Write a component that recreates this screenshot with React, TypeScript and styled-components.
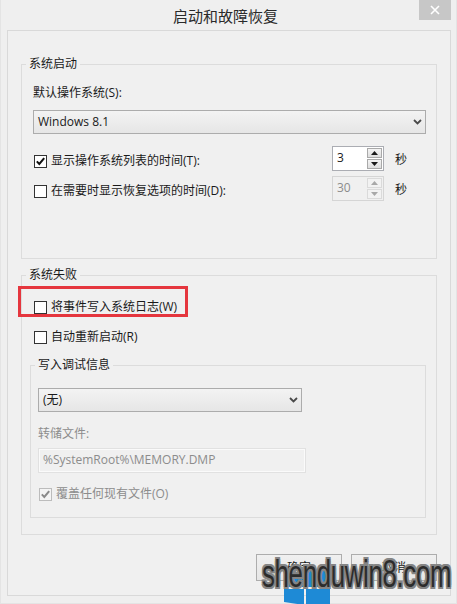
import styled, { createGlobalStyle } from 'styled-components';

const GlobalStyle = createGlobalStyle`
  html, body {
    margin: 0;
    padding: 0;
    background: #f0f0f0;
  }
  body {
    font-family: "Open Sans", "Noto Sans CJK SC", sans-serif;
    font-size: 12px;
    color: #1a1a1a;
  }
  * {
    box-sizing: border-box;
  }
`;

type CheckProps = { checked?: boolean; disabled?: boolean };

function CheckBox({ checked, disabled }: CheckProps) {
  return (
    <Box $disabled={disabled}>
      {checked && (
        <svg width="11" height="11" viewBox="0 0 11 11">
          <path
            d="M1.8 5.4 L4.3 8 L9.2 2.2"
            stroke={disabled ? '#8a8a8a' : '#111'}
            strokeWidth="2"
            fill="none"
          />
        </svg>
      )}
    </Box>
  );
}

function Chevron() {
  return (
    <svg width="9" height="6" viewBox="0 0 9 6">
      <path d="M1 1 L4.5 4.5 L8 1" stroke="#4a4a4a" strokeWidth="1.8" fill="none" />
    </svg>
  );
}

function Spinner({ value, disabled }: { value: string; disabled?: boolean }) {
  const arrow = disabled ? '#a8a8a8' : '#1a1a1a';
  return (
    <SpinBox $disabled={disabled}>
      <SpinValue $disabled={disabled}>{value}</SpinValue>
      <SpinButtons>
        <SpinButton $disabled={disabled}>
          <svg width="7" height="4" viewBox="0 0 7 4">
            <path d="M3.5 0 L7 4 H0 Z" fill={arrow} />
          </svg>
        </SpinButton>
        <SpinButton $disabled={disabled}>
          <svg width="7" height="4" viewBox="0 0 7 4">
            <path d="M0 0 H7 L3.5 4 Z" fill={arrow} />
          </svg>
        </SpinButton>
      </SpinButtons>
    </SpinBox>
  );
}

export default function App() {
  return (
    <>
      <GlobalStyle />
      <Window>
        <TitleBar>
          <span />
          <Title>启动和故障恢复</Title>
          <CloseButton>
            <svg width="10" height="10" viewBox="0 0 10 10">
              <path d="M1 1 L9 9 M9 1 L1 9" stroke="#fff" strokeWidth="1.6" />
            </svg>
          </CloseButton>
        </TitleBar>
        <Body>
          <Panel>
            <GroupBox $padTop={13} $padBottom={57}>
              <Legend>系统启动</Legend>
              <FieldLabel>默认操作系统(S):</FieldLabel>
              <Select $top={9}>
                <span>Windows 8.1</span>
                <Chevron />
              </Select>
              <TimeoutRow $top={12}>
                <CheckLabel>
                  <CheckBox checked />
                  显示操作系统列表的时间(T):
                </CheckLabel>
                <Spinner value="3" />
                <Unit>秒</Unit>
              </TimeoutRow>
              <TimeoutRow $top={5}>
                <CheckLabel>
                  <CheckBox />
                  在需要时显示恢复选项的时间(D):
                </CheckLabel>
                <Spinner value="30" disabled />
                <Unit>秒</Unit>
              </TimeoutRow>
            </GroupBox>

            <GroupBox $padTop={16} $padBottom={16} $top={8}>
              <Legend>系统失败</Legend>
              <CheckRow>
                <Highlight />
                <CheckBox />
                将事件写入系统日志(W)
              </CheckRow>
              <CheckRow $top={14}>
                <CheckBox />
                自动重新启动(R)
              </CheckRow>
              <SubGroup>
                <SubLegend>写入调试信息</SubLegend>
                <Select $width={264}>
                  <span>(无)</span>
                  <Chevron />
                </Select>
                <FieldLabel $top={14} $disabled>
                  转储文件:
                </FieldLabel>
                <TextField>%SystemRoot%\MEMORY.DMP</TextField>
                <CheckRow $top={13} $disabled>
                  <CheckBox checked disabled />
                  覆盖任何现有文件(O)
                </CheckRow>
              </SubGroup>
            </GroupBox>

            <ButtonRow>
              <Button>确定</Button>
              <Button>取消</Button>
            </ButtonRow>
          </Panel>
        </Body>

        <Watermark>
          <WatermarkLogo width="48" height="40" viewBox="0 0 48 40">
            <path d="M0 6 L20 3 V19 H0 Z" fill="#1e8ad6" />
            <path d="M22 2.7 L46 0 V19 H22 Z" fill="#1e8ad6" />
            <path d="M0 21 H20 V37 L0 34 Z" fill="#1e8ad6" />
            <path d="M22 21 H46 V40 L22 37.3 Z" fill="#1e8ad6" />
          </WatermarkLogo>
          <WatermarkText>shenduwin8.com</WatermarkText>
        </Watermark>
      </Window>
    </>
  );
}

const Window = styled.div`
  position: relative;
  width: 457px;
  height: 604px;
  display: flex;
  flex-direction: column;
  background: #efefef;
  box-shadow: inset 1px 0 0 #e4e4e4, inset -1px 0 0 #e4e4e4, inset 0 -1px 0 #e4e4e4;
  overflow: hidden;
`;

const TitleBar = styled.div`
  height: 30px;
  flex: none;
  display: grid;
  grid-template-columns: 1fr auto 1fr;
  padding-right: 6px;
`;

const Title = styled.div`
  align-self: center;
  font-family: "Noto Sans CJK SC", sans-serif;
  font-size: 15px;
  line-height: 20px;
  color: #2a2a2a;
  padding-top: 1px;
`;

const CloseButton = styled.div`
  justify-self: end;
  align-self: start;
  width: 32px;
  height: 20px;
  background: #c7c7c7;
  display: flex;
  align-items: center;
  justify-content: center;
`;

const Body = styled.div`
  flex: 1;
  display: flex;
  padding: 0 6px 8px 7px;
`;

const Panel = styled.div`
  flex: 1;
  display: flex;
  flex-direction: column;
  border: 1px solid #d9d9d9;
  background: #f0f0f0;
  padding: 25px 13px 14px;
`;

const GroupBox = styled.fieldset<{ $padTop: number; $padBottom: number; $top?: number }>`
  margin: ${(p) => p.$top ?? 0}px 0 0;
  min-width: 0;
  border: 1px solid #dcdcdc;
  padding: ${(p) => p.$padTop}px 10px ${(p) => p.$padBottom}px 11px;
`;

const Legend = styled.legend`
  padding: 0 3px;
  margin-left: -7px;
  line-height: 16px;
  color: #1a1a1a;
`;

const SubGroup = styled.fieldset`
  margin: 12px 0 0 -3px;
  min-width: 0;
  border: 1px solid #dcdcdc;
  padding: 15px 10px 15px 7px;
`;

const SubLegend = styled.legend`
  padding: 0 3px;
  margin-left: -3px;
  line-height: 16px;
  color: #1a1a1a;
`;

const FieldLabel = styled.div<{ $top?: number; $disabled?: boolean }>`
  margin-top: ${(p) => p.$top ?? 0}px;
  line-height: 16px;
  color: ${(p) => (p.$disabled ? '#8c8c8c' : '#1a1a1a')};
`;

const Select = styled.div<{ $width?: number; $top?: number }>`
  margin-top: ${(p) => p.$top ?? 0}px;
  width: ${(p) => (p.$width ? `${p.$width}px` : '100%')};
  height: 24px;
  display: flex;
  align-items: center;
  justify-content: space-between;
  padding: 0 3px 0 4px;
  border: 1px solid #acacac;
  background: linear-gradient(#f3f3f3, #e6e6e6);
  line-height: 16px;
  color: #1a1a1a;
`;

const TimeoutRow = styled.div<{ $top: number }>`
  margin-top: ${(p) => p.$top}px;
  display: grid;
  grid-template-columns: 288px 52px auto;
  column-gap: 11px;
  align-items: center;
  height: 25px;
`;

const CheckLabel = styled.label`
  display: flex;
  align-items: center;
  gap: 4px;
  padding-top: 5px;
  padding-left: 1px;
  line-height: 16px;
`;

const Box = styled.span<{ $disabled?: boolean }>`
  width: 13px;
  height: 13px;
  flex: none;
  display: inline-flex;
  align-items: center;
  justify-content: center;
  border: 1px solid ${(p) => (p.$disabled ? '#bcbcbc' : '#333')};
  background: ${(p) => (p.$disabled ? '#f4f4f4' : '#fff')};
`;

const SpinBox = styled.div<{ $disabled?: boolean }>`
  height: 25px;
  display: flex;
  border: 1px solid ${(p) => (p.$disabled ? '#d5d5d5' : '#abadb3')};
  background: ${(p) => (p.$disabled ? '#f0f0f0' : '#fff')};
`;

const SpinValue = styled.div<{ $disabled?: boolean }>`
  flex: 1;
  padding: 3px 0 0 4px;
  line-height: 16px;
  color: ${(p) => (p.$disabled ? '#8c8c8c' : '#1a1a1a')};
`;

const SpinButtons = styled.div`
  width: 16px;
  display: flex;
  flex-direction: column;
  gap: 1px;
  padding: 1px 1px 1px 0;
`;

const SpinButton = styled.div<{ $disabled?: boolean }>`
  flex: 1;
  display: flex;
  align-items: center;
  justify-content: center;
  border: 1px solid ${(p) => (p.$disabled ? '#dadada' : '#a9a9a9')};
  background: ${(p) => (p.$disabled ? '#f2f2f2' : 'linear-gradient(#f4f4f4, #dedede)')};
`;

const Unit = styled.span`
  padding-top: 3px;
  line-height: 16px;
`;

const CheckRow = styled.label<{ $top?: number; $disabled?: boolean }>`
  position: relative;
  margin-top: ${(p) => p.$top ?? 0}px;
  display: flex;
  align-items: center;
  gap: 4px;
  padding-left: 1px;
  height: 16px;
  line-height: 16px;
  color: ${(p) => (p.$disabled ? '#8c8c8c' : '#1a1a1a')};
`;

const Highlight = styled.span`
  position: absolute;
  left: -15px;
  top: -13px;
  bottom: -2px;
  width: 170px;
  border: 3px solid #e5363e;
  pointer-events: none;
`;

const TextField = styled.div`
  margin-top: 6px;
  width: 268px;
  height: 25px;
  padding: 3px 0 0 4px;
  border: 1px solid #e1e1e1;
  box-shadow: inset 0 0 0 1px #fafafa;
  line-height: 16px;
  color: #8c8c8c;
`;

const ButtonRow = styled.div`
  margin-top: auto;
  display: flex;
  justify-content: flex-end;
  gap: 9px;
`;

const Button = styled.div`
  width: 86px;
  height: 27px;
  display: flex;
  align-items: center;
  justify-content: center;
  border: 1px solid #adadad;
  background: linear-gradient(#f0f0f0, #e6e6e6);
  line-height: 16px;
`;

const Watermark = styled.div`
  position: absolute;
  left: 262px;
  top: 552px;
  width: 195px;
  height: 52px;
  pointer-events: none;
`;

const WatermarkLogo = styled.svg`
  position: absolute;
  left: 22px;
  top: 16px;
`;

const WatermarkText = styled.div`
  position: absolute;
  left: 0;
  top: 0;
  font-family: "Liberation Sans", sans-serif;
  font-size: 38px;
  line-height: 44px;
  letter-spacing: -0.5px;
  color: #2c2c2c;
  white-space: nowrap;
  transform: scaleX(0.68);
  transform-origin: left top;
  text-shadow:
    2px 0 0 #858585, -2px 0 0 #858585, 0 2px 0 #858585, 0 -2px 0 #858585,
    2px 2px 0 #858585, -2px -2px 0 #858585, 2px -2px 0 #858585, -2px 2px 0 #858585;
`;
